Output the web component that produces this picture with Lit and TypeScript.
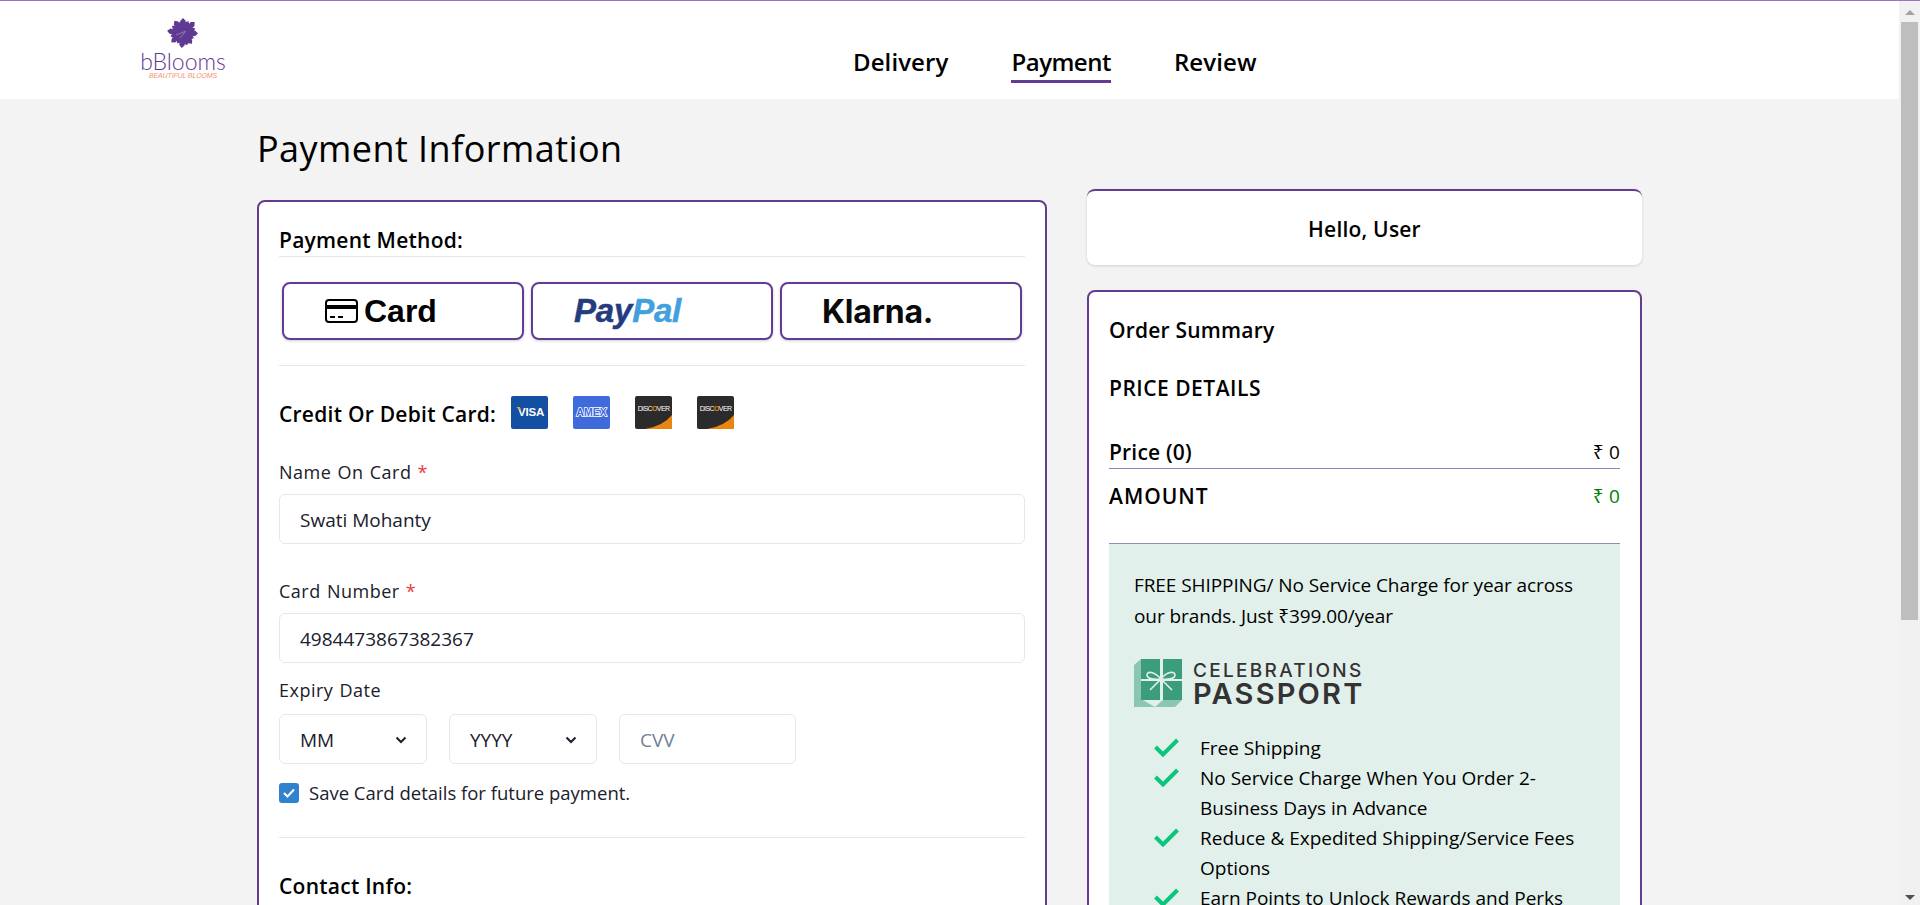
import { html, css, LitElement, svg } from "lit";
import { customElement } from "lit/decorators.js";

const PETALS = [
  [0, 15], [24, 13], [47, 16], [70, 13], [92, 15], [116, 12], [140, 14], [162, 13],
  [185, 15], [208, 12], [232, 15], [255, 13], [278, 16], [302, 13], [325, 15], [345, 12],
];

const BENEFITS = [
  "Free Shipping",
  "No Service Charge When You Order 2-Business Days in Advance",
  "Reduce & Expedited Shipping/Service Fees Options",
  "Earn Points to Unlock Rewards and Perks",
];

@customElement("brand-logo")
export class BrandLogo extends LitElement {
  static styles = css`
    :host {
      display: flex;
      flex-direction: column;
      align-items: center;
      width: 86px;
    }
    svg {
      display: block;
      width: 32px;
      height: 31px;
    }
    .Name {
      font: 300 23px/20px Lato, sans-serif;
      color: #5f3a92;
      margin-top: 3px;
    }
    .Tag {
      font: italic 400 7px/10px "Liberation Sans", sans-serif;
      letter-spacing: -0.15px;
      color: #f5956a;
      white-space: nowrap;
    }
  `;

  render() {
    return html`<svg viewBox="-16 -16 32 31">
        ${PETALS.map(
          ([a, r]) => svg`<path
            d="M-1 -1 L-2.8 ${-r + 3} L0 ${-r} L2.8 ${-r + 3} L1 -1 Z"
            fill="#5f3a92"
            transform="rotate(${a})"
          />`
        )}
        <circle r="3" fill="#5f3a92" />
        <path d="M-7 2 L3 -2 M-3 5 L2 -1" stroke="#b9a5d2" stroke-width=".6" />
      </svg>
      <div class="Name">bBlooms</div>
      <div class="Tag">BEAUTIFUL BLOOMS</div>`;
  }
}

@customElement("app-root")
export class AppRoot extends LitElement {
  static styles = css`
    :host {
      display: flex;
      flex-direction: column;
      height: 100vh;
      overflow: hidden;
      font-family: "Open Sans", "Noto Sans", sans-serif;
      color: #000;
    }
    * {
      box-sizing: border-box;
    }
    .Top-line {
      height: 1px;
      flex: none;
      background: #9873bf;
    }
    .Window {
      flex: 1;
      min-height: 0;
      display: flex;
    }
    .Page {
      flex: 1;
      min-width: 0;
      overflow: hidden;
      background: #f3f3f3;
    }
    .Scrollbar {
      flex: none;
      width: 21px;
      background: #f1f1f1;
      display: flex;
      flex-direction: column;
      align-items: center;
      padding-top: 9px;
    }
    .Scroll-thumb {
      width: 17px;
      height: 598px;
      margin-top: 7px;
      background: #bebebe;
    }
    .Scroll-down {
      margin-top: auto;
      margin-bottom: 5px;
    }
    .Scrollbar svg {
      display: block;
      flex: none;
    }
    .Header {
      display: flex;
      height: 98px;
      background: #fff;
      padding-left: 140px;
    }
    .Logo {
      padding-top: 16px;
    }
    .Nav {
      display: flex;
      gap: 63px;
      margin-left: 627px;
      padding-top: 44px;
    }
    .Nav-item {
      font-size: 24px;
      line-height: 34px;
      height: 38px;
      font-weight: 600;
      letter-spacing: 0.1px;
      border-bottom: 3px solid transparent;
    }
    .Nav-item.Active {
      border-bottom-color: #643b92;
      letter-spacing: -0.5px;
    }
    .Main {
      padding-left: 257px;
    }
    .Title {
      font-size: 36px;
      font-weight: 500;
      letter-spacing: 0.45px;
      line-height: 48px;
      margin: 26px 0 0;
    }
    .Columns {
      display: flex;
      align-items: flex-start;
      gap: 40px;
    }
    .Left {
      width: 790px;
      min-height: 900px;
      margin-top: 27px;
      background: #fff;
      border: 2px solid #643b92;
      border-radius: 8px;
      padding: 20px;
    }
    .Right {
      width: 555px;
      margin-top: 16px;
      display: flex;
      flex-direction: column;
      gap: 25px;
    }
    .Heading {
      font-size: 21px;
      font-weight: 600;
      letter-spacing: 0.25px;
      line-height: 30px;
    }
    .Method-head {
      border-bottom: 1px solid #e2e8f0;
      height: 35px;
      line-height: 36px;
    }
    .Methods {
      display: grid;
      grid-template-columns: repeat(3, 242px);
      gap: 7px;
      padding: 25px 3px;
      border-bottom: 1px solid #e2e8f0;
    }
    .Method {
      height: 58px;
      border: 2px solid #643b92;
      border-radius: 8px;
      box-shadow: 0 1px 3px rgba(0, 0, 0, 0.2);
      display: flex;
      align-items: center;
      font-family: "Liberation Sans", sans-serif;
      font-weight: 700;
      color: #000;
    }
    .Method svg {
      margin-right: 6px;
    }
    .Method-card {
      font-size: 32px;
      padding-left: 41px;
    }
    .Method-paypal {
      font-size: 33px;
      font-style: italic;
      padding-left: 41px;
      color: #253b80;
      letter-spacing: -0.2px;
      -webkit-text-stroke: 0.5px currentColor;
    }
    .Method-paypal span {
      color: #42a0dc;
    }
    .Method-klarna {
      font-family: Inter, "Liberation Sans", sans-serif;
      font-size: 32px;
      padding-left: 40px;
      letter-spacing: -0.2px;
      color: #0a0a0a;
    }
    .Card-row {
      display: flex;
      align-items: center;
      margin-top: 31px;
      height: 34px;
    }
    .Card-row .Heading {
      margin-right: 15px;
    }
    .Badges {
      display: flex;
      gap: 25px;
      margin-top: -3px;
    }
    .Badge {
      position: relative;
      width: 37px;
      height: 33px;
      border-radius: 2px;
      display: flex;
      align-items: center;
      justify-content: center;
      color: #fff;
      font: 700 12px/1 "Liberation Sans", sans-serif;
      white-space: nowrap;
      overflow: hidden;
    }
    .Badge-visa {
      background: #134fa3;
      font-size: 11.5px;
      padding-left: 3px;
      letter-spacing: -0.2px;
    }
    .Flick {
      position: absolute;
      left: 5px;
      top: 11px;
    }
    .Badge-amex {
      background: #3f6adb;
      font-size: 10.5px;
      color: #3f6adb;
      -webkit-text-stroke: 1.5px #fff;
      paint-order: stroke fill;
    }
    .Badge-discover {
      background: #2b2b2b;
      font-size: 7px;
      font-weight: 400;
      letter-spacing: -0.6px;
      padding-bottom: 9px;
    }
    .Badge-discover b {
      color: #e98a10;
    }
    .Badge-discover svg {
      position: absolute;
      right: 0;
      bottom: 0;
    }
    .Field {
      display: flex;
      flex-direction: column;
    }
    .Label {
      font-size: 18px;
      line-height: 27px;
      color: #1a202c;
      letter-spacing: 0.5px;
      word-spacing: 1px;
    }
    .Req {
      color: #e53e3e;
    }
    .Input {
      height: 50px;
      border: 1px solid #e2e8f0;
      border-radius: 6px;
      padding: 2px 20px 0;
      display: flex;
      align-items: center;
      justify-content: space-between;
      font-size: 19px;
      color: #1a202c;
      background: #fff;
      margin-top: 8px;
    }
    .Placeholder {
      color: #718096;
    }
    .Expiry {
      display: flex;
      gap: 22px;
      margin-top: 10px;
    }
    .Expiry .Input {
      margin: 0;
      padding-right: 18px;
    }
    .Select {
      width: 148px;
    }
    .Expiry .Select {
      padding-right: 19px;
    }
    .Cvv {
      width: 177px;
    }
    .Check-row {
      display: flex;
      align-items: center;
      gap: 10px;
      margin-top: 17px;
      font-size: 18.5px;
      line-height: 24px;
      color: #1a202c;
    }
    .Check {
      width: 20px;
      height: 20px;
      border-radius: 3px;
      background: #3182ce;
      display: flex;
      align-items: center;
      justify-content: center;
    }
    .Rule {
      height: 1px;
      background: #e2e8f0;
      margin-top: 32px;
    }
    .Contact {
      margin-top: 33px;
    }
    .Hello {
      height: 76px;
      padding-top: 2px;
      background: #fff;
      border-top: 2px solid #643b92;
      border-radius: 8px;
      box-shadow: 0 1px 3px rgba(0, 0, 0, 0.14);
      display: flex;
      align-items: center;
      justify-content: center;
      font-size: 21px;
      font-weight: 600;
      letter-spacing: 0.2px;
    }
    .Summary {
      background: #fff;
      border: 2px solid #643b92;
      border-radius: 8px;
      padding: 20px;
    }
    .Sum-title {
      font-size: 21px;
      font-weight: 600;
      letter-spacing: 0.2px;
      line-height: 36px;
    }
    .Sum-head {
      margin-top: 22px;
      letter-spacing: 0.5px;
    }
    .Line {
      display: flex;
      justify-content: space-between;
      align-items: center;
      font-size: 21px;
      font-weight: 600;
      letter-spacing: 0.2px;
      line-height: 30px;
    }
    .Line-price {
      margin-top: 30px;
      height: 33px;
      border-bottom: 1px solid #9b7fb8;
    }
    .Line-amount {
      margin-top: 12px;
      height: 30px;
    }
    .Amount {
      letter-spacing: 1px;
    }
    .Value {
      font-size: 19px;
      font-weight: 400;
    }
    .Green {
      color: #008000;
    }
    .Offer {
      margin-top: 32px;
      background: #e2f0eb;
      border-top: 1px solid #9b8ab0;
      padding: 26px 24px 30px 25px;
      font-size: 19px;
      line-height: 31px;
    }
    .Offer-text {
      letter-spacing: -0.08px;
    }
    .Passport {
      display: flex;
      align-items: center;
      gap: 11px;
      margin: 27px 0 26px;
    }
    .Passport-text {
      color: #333;
      font-family: Inter, sans-serif;
      white-space: nowrap;
      padding-top: 1px;
    }
    .Passport-top {
      font-size: 19px;
      line-height: 20px;
      letter-spacing: 2.3px;
      font-weight: 500;
    }
    .Passport-bottom {
      font-size: 29px;
      line-height: 26px;
      letter-spacing: 2.2px;
      font-weight: 600;
    }
    .Benefits {
      list-style: none;
      margin: 0;
      padding: 0 0 0 20px;
      line-height: 30px;
    }
    .Benefits li {
      display: flex;
      gap: 21px;
    }
    .Benefits svg {
      flex: none;
      margin-top: 5px;
    }
  `;

  private cardIcon() {
    return html`<svg width="33" height="24" viewBox="0 0 33 24" fill="none">
      <rect x="1" y="1" width="31" height="22" rx="3" stroke="#000" stroke-width="2" />
      <rect x="1" y="6" width="31" height="4" fill="#000" />
      <path d="M5 18h5M13 18h5" stroke="#000" stroke-width="2" />
    </svg>`;
  }

  private chevron() {
    return html`<svg width="12" height="8" viewBox="0 0 12 8" fill="none">
      <path d="M1.5 1.5 6 6l4.5-4.5" stroke="#1a202c" stroke-width="2" />
    </svg>`;
  }

  private checkMark() {
    return html`<svg width="25" height="19" viewBox="0 0 25 19" fill="none">
      <path d="M1.5 9 9 16.5 23.5 2" stroke="#0cc57c" stroke-width="4" />
    </svg>`;
  }

  private discover() {
    return html`<div class="Badge Badge-discover">
      <span>DISC<b>O</b>VER</span>
      <svg width="37" height="14" viewBox="0 0 37 14">
        <path d="M10 14Q28 11 37 0V14Z" fill="#e9860f" />
      </svg>
    </div>`;
  }

  private giftIcon() {
    return html`<svg width="48" height="48" viewBox="0 0 48 48" fill="none">
      <path d="M0 6 7 0V40L21 48H0Z" fill="#8ac6b1" />
      <path d="M21 48 29 41H48L41 48Z" fill="#8ac6b1" />
      <rect x="7" y="0" width="19" height="20" fill="#3b9d7b" />
      <rect x="29" y="0" width="19" height="20" fill="#3b9d7b" />
      <rect x="7" y="22" width="19" height="19" fill="#3b9d7b" />
      <rect x="29" y="22" width="19" height="19" fill="#3b9d7b" />
      <path
        d="M27 20C20 12 13 12 13 16s8 5 14 4c6 1 14 0 14-4s-8-4-14 4M27 20 16 31M27 20 38 31"
        stroke="#e2f0eb"
        stroke-width="1.6"
      />
    </svg>`;
  }

  render() {
    return html`<div class="Top-line"></div>
      <div class="Window">
        <div class="Page">
          <header class="Header">
            <brand-logo class="Logo"></brand-logo>
            <nav class="Nav">
              <div class="Nav-item">Delivery</div>
              <div class="Nav-item Active">Payment</div>
              <div class="Nav-item">Review</div>
            </nav>
          </header>
          <main class="Main">
            <h1 class="Title">Payment Information</h1>
            <div class="Columns">
              <section class="Left">
                <div class="Heading Method-head">Payment Method:</div>
                <div class="Methods">
                  <div class="Method Method-card">${this.cardIcon()}Card</div>
                  <div class="Method Method-paypal">Pay<span>Pal</span></div>
                  <div class="Method Method-klarna">Klarna.</div>
                </div>
                <div class="Card-row">
                  <div class="Heading">Credit Or Debit Card:</div>
                  <div class="Badges">
                    <div class="Badge Badge-visa">
                      <svg class="Flick" width="5" height="5" viewBox="0 0 5 5">
                        <path d="M0 0H4L5 5Q3 1 0 0Z" fill="#e9a020" />
                      </svg>
                      VISA
                    </div>
                    <div class="Badge Badge-amex">AMEX</div>
                    ${this.discover()} ${this.discover()}
                  </div>
                </div>
                <div class="Field" style="margin-top:28px">
                  <div class="Label">Name On Card <span class="Req">*</span></div>
                  <div class="Input">Swati Mohanty</div>
                </div>
                <div class="Field" style="margin-top:34px">
                  <div class="Label">Card Number <span class="Req">*</span></div>
                  <div class="Input">4984473867382367</div>
                </div>
                <div class="Field" style="margin-top:14px">
                  <div class="Label">Expiry Date</div>
                  <div class="Expiry">
                    <div class="Input Select">MM ${this.chevron()}</div>
                    <div class="Input Select">YYYY ${this.chevron()}</div>
                    <div class="Input Cvv"><span class="Placeholder">CVV</span></div>
                  </div>
                </div>
                <div class="Check-row">
                  <div class="Check">
                    <svg width="12" height="10" viewBox="0 0 12 10" fill="none">
                      <path d="M1 5l3.5 3.5L11 1.5" stroke="#fff" stroke-width="2" />
                    </svg>
                  </div>
                  Save Card details for future payment.
                </div>
                <div class="Rule"></div>
                <div class="Heading Contact">Contact Info:</div>
              </section>
              <aside class="Right">
                <div class="Hello">Hello, User</div>
                <div class="Summary">
                  <div class="Sum-title">Order Summary</div>
                  <div class="Sum-title Sum-head">PRICE DETAILS</div>
                  <div class="Line Line-price">
                    <span>Price (0)</span><span class="Value">₹ 0</span>
                  </div>
                  <div class="Line Line-amount">
                    <span class="Amount">AMOUNT</span><span class="Value Green">₹ 0</span>
                  </div>
                  <div class="Offer">
                    <div class="Offer-text">
                      FREE SHIPPING/ No Service Charge for year across our brands. Just ₹399.00/year
                    </div>
                    <div class="Passport">
                      ${this.giftIcon()}
                      <div class="Passport-text">
                        <div class="Passport-top">CELEBRATIONS</div>
                        <div class="Passport-bottom">PASSPORT</div>
                      </div>
                    </div>
                    <ul class="Benefits">
                      ${BENEFITS.map((b) => html`<li>${this.checkMark()}<span>${b}</span></li>`)}
                    </ul>
                  </div>
                </div>
              </aside>
            </div>
          </main>
        </div>
        <div class="Scrollbar">
          <svg width="10" height="5" viewBox="0 0 10 5"><path d="M5 0 10 5H0Z" fill="#a3a3a3" /></svg>
          <div class="Scroll-thumb"></div>
          <svg class="Scroll-down" width="10" height="5" viewBox="0 0 10 5">
            <path d="M5 5 10 0H0Z" fill="#505050" />
          </svg>
        </div>
      </div>`;
  }
}

declare global {
  interface HTMLElementTagNameMap {
    "app-root": AppRoot;
    "brand-logo": BrandLogo;
  }
}
